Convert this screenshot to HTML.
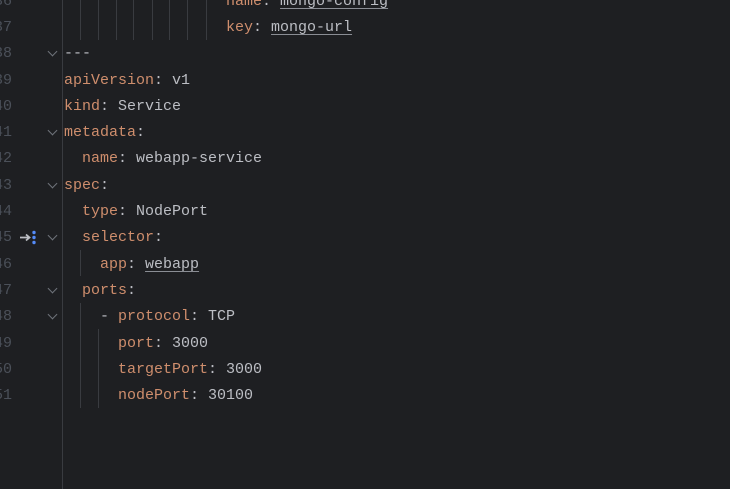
<!DOCTYPE html>
<html><head><style>
body{margin:0;width:730px;height:489px;background:#1e1f22;overflow:hidden;position:relative;font-family:"Liberation Mono",monospace;font-size:15px}
.l{position:absolute;left:64px;height:26px;line-height:26px;white-space:pre;color:#bcbec4;margin-top:1px}
.n{position:absolute;right:718px;height:26px;line-height:26px;color:#4b5059;text-align:right;margin-top:1px}
.k{color:#cf8e6d}
.u{text-decoration:underline;text-decoration-color:#8a8d94;text-underline-offset:3px}
.g{position:absolute;width:1px;background:#393b40}
.f{position:absolute;left:49px;width:6px;height:6px;border-right:1.3px solid #6f737a;border-bottom:1.3px solid #6f737a;transform:rotate(45deg)}
</style></head><body>
<div class="g" style="left:62px;top:0;height:489px"></div>
<div class="g" style="left:80px;top:0;height:40px"></div>
<div class="g" style="left:98px;top:0;height:40px"></div>
<div class="g" style="left:116px;top:0;height:40px"></div>
<div class="g" style="left:133px;top:0;height:40px"></div>
<div class="g" style="left:152px;top:0;height:40px"></div>
<div class="g" style="left:169px;top:0;height:40px"></div>
<div class="g" style="left:187px;top:0;height:40px"></div>
<div class="g" style="left:206px;top:0;height:40px"></div>
<div class="g" style="left:80px;top:250px;height:26px"></div>
<div class="g" style="left:80px;top:303px;height:105px"></div>
<div class="g" style="left:98px;top:329px;height:79px"></div>

<div class="n" style="top:-12px">36</div>
<div class="n" style="top:14px">37</div>
<div class="n" style="top:40px">38</div>
<div class="n" style="top:67px">39</div>
<div class="n" style="top:93px">40</div>
<div class="n" style="top:119px">41</div>
<div class="n" style="top:145px">42</div>
<div class="n" style="top:172px">43</div>
<div class="n" style="top:198px">44</div>
<div class="n" style="top:224px">45</div>
<div class="n" style="top:251px">46</div>
<div class="n" style="top:277px">47</div>
<div class="n" style="top:303px">48</div>
<div class="n" style="top:330px">49</div>
<div class="n" style="top:356px">50</div>
<div class="n" style="top:382px">51</div>

<div class="f" style="top:48px"></div>
<div class="f" style="top:127px"></div>
<div class="f" style="top:180px"></div>
<div class="f" style="top:232px"></div>
<div class="f" style="top:285px"></div>
<div class="f" style="top:311px"></div>

<svg style="position:absolute;left:19px;top:230px" width="20" height="16">
<path d="M1 7.5H10M7 4.5L10.5 7.5L7 10.5" stroke="#bcbec4" stroke-width="1.8" fill="none"/>
<circle cx="15" cy="2.5" r="1.7" fill="#548af7"/><circle cx="15" cy="7.5" r="1.7" fill="#548af7"/><circle cx="15" cy="12.5" r="1.7" fill="#548af7"/>
</svg>

<div class="l" style="top:-12px;left:226px"><span class="k">name</span>: <span class="u">mongo-config</span></div>
<div class="l" style="top:14px;left:226px"><span class="k">key</span>: <span class="u">mongo-url</span></div>
<div class="l" style="top:40px">---</div>
<div class="l" style="top:67px"><span class="k">apiVersion</span>: v1</div>
<div class="l" style="top:93px"><span class="k">kind</span>: Service</div>
<div class="l" style="top:119px"><span class="k">metadata</span>:</div>
<div class="l" style="top:145px">  <span class="k">name</span>: webapp-service</div>
<div class="l" style="top:172px"><span class="k">spec</span>:</div>
<div class="l" style="top:198px">  <span class="k">type</span>: NodePort</div>
<div class="l" style="top:224px">  <span class="k">selector</span>:</div>
<div class="l" style="top:251px">    <span class="k">app</span>: <span class="u">webapp</span></div>
<div class="l" style="top:277px">  <span class="k">ports</span>:</div>
<div class="l" style="top:303px">    - <span class="k">protocol</span>: TCP</div>
<div class="l" style="top:330px">      <span class="k">port</span>: 3000</div>
<div class="l" style="top:356px">      <span class="k">targetPort</span>: 3000</div>
<div class="l" style="top:382px">      <span class="k">nodePort</span>: 30100</div>
</body></html>
